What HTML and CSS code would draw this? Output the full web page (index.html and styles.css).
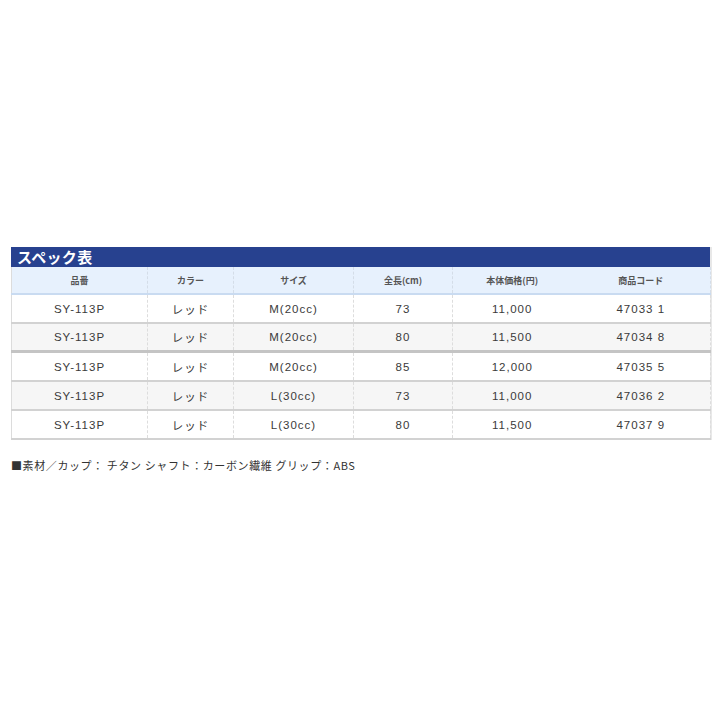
FILE: index.html
```html
<!DOCTYPE html>
<html lang="ja">
<head>
<meta charset="utf-8">
<link rel="stylesheet" href="styles.css">
</head>
<body>
<div class="page">
  <div class="spec">
    <div class="title">スペック表</div>
    <table class="tbl">
      <colgroup>
        <col class="c1"><col class="c2"><col class="c3"><col class="c4"><col class="c5"><col class="c6">
      </colgroup>
      <thead>
        <tr><th>品番</th><th>カラー</th><th>サイズ</th><th>全長(cm)</th><th class="nob">本体価格(円)</th><th>商品コード</th></tr>
      </thead>
      <tbody>
        <tr><td>SY-113P</td><td>レッド</td><td>M(20cc)</td><td>73</td><td class="nob">11,000</td><td>47033 1</td></tr>
        <tr class="alt thick"><td>SY-113P</td><td>レッド</td><td>M(20cc)</td><td>80</td><td class="nob">11,500</td><td>47034 8</td></tr>
        <tr><td>SY-113P</td><td>レッド</td><td>M(20cc)</td><td>85</td><td class="nob">12,000</td><td>47035 5</td></tr>
        <tr class="alt"><td>SY-113P</td><td>レッド</td><td>L(30cc)</td><td>73</td><td class="nob">11,000</td><td>47036 2</td></tr>
        <tr><td>SY-113P</td><td>レッド</td><td>L(30cc)</td><td>80</td><td class="nob">11,500</td><td>47037 9</td></tr>
      </tbody>
    </table>
  </div>
  <p class="note">■素材／カップ： チタン シャフト：カーボン繊維 グリップ：ABS</p>
</div>
</body>
</html>
```
FILE: styles.css
```css
html, body {
  margin: 0;
  padding: 0;
  background: #fff;
}
.page {
  padding: 247px 0 0 11px;
  font-family: "Liberation Sans", "Noto Sans CJK JP", sans-serif;
  color: #333;
}
.spec {
  width: 699px;
  border-right: 2px solid #e8e8e8;
  box-sizing: content-box;
}
.title {
  height: 20px;
  line-height: 20px;
  background: #27418f;
  color: #fff;
  font-family: "Noto Sans CJK JP", sans-serif;
  font-weight: bold;
  font-size: 15px;
  padding-left: 6px;
  letter-spacing: 0.3px;
}
.tbl {
  width: 699px;
  border-collapse: collapse;
  table-layout: fixed;
  border-left: 1px solid #dcdcdc;
}
.c1 { width: 136px; }
.c2 { width: 86px; }
.c3 { width: 120px; }
.c4 { width: 99px; }
.c5 { width: 119px; }
.c6 { width: 139px; }
.tbl th {
  height: 26px;
  background: #e7f1fd;
  border-bottom: 2px solid #c9dbf1;
  border-right: 1px dashed #d4dde8;
  font-family: "Noto Sans CJK JP", sans-serif;
  font-size: 9px;
  font-weight: bold;
  color: #555;
  padding: 0;
  text-align: center;
}
.tbl td {
  height: 27px;
  border-bottom: 2px solid #d2d2d2;
  border-right: 1px dashed #dddddd;
  font-size: 11.5px;
  letter-spacing: 1px;
  padding: 0;
  text-align: center;
  color: #3a3a3a;
}
.tbl th.nob, .tbl td.nob { border-right: none; }
.tbl tr.alt td { background: #f6f6f6; }
.tbl tr.thick td { border-bottom: 3px solid #c4c4c4; height: 26px; }
.note {
  margin: 17px 0 0 0;
  font-size: 11px;
  letter-spacing: 0.6px;
  color: #333;
  font-family: "Noto Sans CJK JP", sans-serif;
}
```
